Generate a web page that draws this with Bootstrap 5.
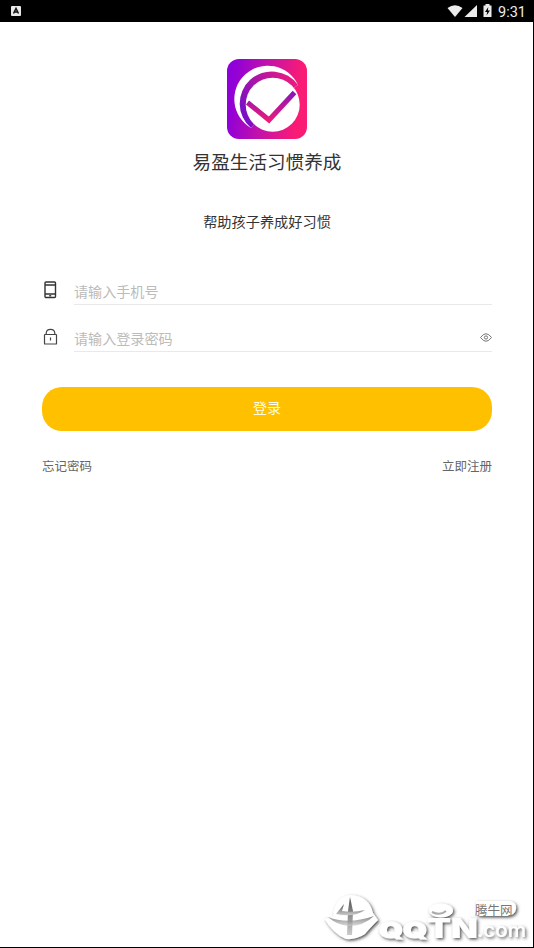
<!DOCTYPE html>
<html lang="zh-CN">
<head>
<meta charset="utf-8">
<meta name="viewport" content="width=device-width, initial-scale=1">
<title>易盈生活习惯养成</title>
<link rel="stylesheet" href="https://cdn.jsdelivr.net/npm/bootstrap@5.3.0/dist/css/bootstrap.min.css">
<style>
body{font-family:"Noto Sans CJK SC",sans-serif;color:#333}
svg{display:block;flex:none}
.screen{height:948px;border-right:1px solid #000;border-bottom:1px solid #000}
.statusbar{height:22px;background:#000;padding:0 7px 0 11px}
.clock{font:400 14.5px/24px Roboto,sans-serif;color:#eee;margin-left:5px}
.form-area{padding:37px 41px 0 42px}
.app-name{font-size:18.6px;line-height:28px;margin-top:8px}
.slogan{font-size:14.2px;line-height:22px;margin-top:35px}
.fields{margin-top:46px}
.field-row{height:47px}
.field-icon{width:32px;padding-top:2px}
.field-line{border-bottom:1px solid #e9e9e9;height:27px}
.field-line .form-control{font-size:14.1px;line-height:22px;height:26px;padding:2px 0 2px!important;border-radius:0;box-shadow:none}
.field-line .form-control::placeholder{color:#bbb;opacity:1}
.btn-login{height:44px;margin-top:15px;background:#ffc000!important;border-radius:20px;font-size:14px;color:#fffbe5!important;border:0;padding:0 0 3px}
.links{margin-top:25px;font-size:12.5px;line-height:20px}
.links a{color:#666}
.brand-stamp{right:0;bottom:0;width:220px;height:60px}
</style>
</head>
<body class="bg-white">
<div class="screen position-relative overflow-hidden">
<header class="statusbar d-flex align-items-center">
<svg width="10" height="10" viewBox="0 0 10 10"><rect width="10" height="10" rx="1" fill="#e8e8e8"/><path d="M2.5 7.5 5 2.5 7.5 7.5M3.6 6h2.8" fill="none" stroke="#111" stroke-width="1.5"/></svg>
<svg class="ms-auto" width="46" height="16" viewBox="0 0 46 16" fill="#ececec"><path d="M.500 5Q8-.5 15.500 5L8 14Z"/><path d="M17.500 14 30 2V14Z"/><path d="M36.500 2.500h2V1h4v1.500h2V14h-8Z"/><path d="M41.300 4 38 9h2.200l-.7 3.500L43 7.500h-2.200Z" fill="#000"/></svg>
<span class="clock pt-1">9:31</span>
</header>
<main class="form-area">
<div class="text-center">
<svg class="mx-auto" width="80" height="80" viewBox="0 0 80 80">
<defs><linearGradient id="tile" gradientUnits="userSpaceOnUse" x1="0" y1="35" x2="80" y2="45"><stop offset=".05" stop-color="#9000d8"/><stop offset=".5" stop-color="#c814a4"/><stop offset=".9" stop-color="#fa1b74"/></linearGradient>
<linearGradient id="arc" gradientUnits="userSpaceOnUse" x1="12" y1="50" x2="70" y2="20"><stop stop-color="#7610c8"/><stop offset="1" stop-color="#f01b7c"/></linearGradient>
<linearGradient id="tick" gradientUnits="userSpaceOnUse" x1="0" y1="34" x2="0" y2="62"><stop stop-color="#8a16b8"/><stop offset="1" stop-color="#ee1b78"/></linearGradient></defs>
<rect width="80" height="80" rx="12" fill="url(#tile)"/>
<path d="M24 69A33.400 33.400 0 1 1 71 26L45 45Z" fill="#fff"/>
<path d="M24 69A32.100 32.100 0 1 1 71 26L45 45Z" fill="url(#arc)"/>
<circle cx="45.700" cy="45.700" r="27" fill="#fff"/>
<path d="M20.500 43.500 42 61 67.500 33.500" fill="none" stroke="url(#tick)" stroke-width="5"/>
</svg>
<h1 class="app-name fw-normal mb-0">易盈生活习惯养成</h1>
<p class="slogan mb-0">帮助孩子养成好习惯</p>
</div>
<form class="fields">
<div class="field-row d-flex">
<div class="field-icon"><svg width="17" height="20" viewBox="0 0 17 20" fill="none" stroke="#333" stroke-width="1.400"><rect x="3" y="2" width="10.500" height="15.500" rx="1"/><path d="M3 5h10.500M3 14h10.500"/><path d="M7.200 15.800h2"/></svg></div>
<div class="field-line flex-grow-1"><input class="form-control border-0 bg-transparent" type="tel" placeholder="请输入手机号" aria-label="手机号"></div>
</div>
<div class="field-row d-flex">
<div class="field-icon"><svg width="17" height="20" viewBox="0 0 17 20" fill="none" stroke="#444" stroke-width="1.200"><rect x="2.500" y="7.500" width="12" height="9.500" rx=".6"/><path d="M4.200 7.500V6Q4.500 2.300 8.500 2.300T12.800 6v1.500M8.500 10.500v3"/></svg></div>
<div class="field-line flex-grow-1 d-flex"><input class="form-control border-0 bg-transparent" type="password" placeholder="请输入登录密码" aria-label="登录密码"><svg class="mt-2" width="12" height="10" viewBox="0 0 12 10" fill="none" stroke="#666" stroke-width=".9"><path d="M.5 4.500Q6-3 11.500 4.500 6 12 .5 4.500Z"/><circle cx="6" cy="4.500" r="1.600"/></svg></div>
</div>
<button class="btn btn-login w-100" type="button">登录</button>
<div class="links d-flex justify-content-between"><a class="text-decoration-none" href="#">忘记密码</a><a class="text-decoration-none" href="#">立即注册</a></div>
</form>
</main>
<svg class="brand-stamp position-absolute" viewBox="314 888 220 60">
<defs><filter id="shade" x="-10%" y="-20%" width="125%" height="150%"><feDropShadow dx="1.500" dy="1.500" stdDeviation="1.500" flood-color="#333" flood-opacity=".85"/></filter>
<linearGradient id="horn" x1="0" y1="0" x2="0" y2="1"><stop stop-color="#555"/><stop offset="1" stop-color="#ccc"/></linearGradient></defs>
<g filter="url(#shade)" fill="#fff">
<path d="M325 919Q331 921 334 917 336 897 352 896 370 897 374 914L379 921Q371 929 366 935 357 941 347 940 334 935 325 919Z"/>
<ellipse cx="442" cy="911.500" rx="12" ry="7"/>
<path d="M477 902h33q8 1 7 8-1 7-10 7h-25q-5 0-5-4Z"/>
<text x="380" y="939" font-family="Inter,sans-serif" font-weight="900" font-size="21" textLength="48" lengthAdjust="spacingAndGlyphs" stroke="#fff">QQ</text>
<text x="428" y="939" font-family="Inter,sans-serif" font-weight="900" font-size="27" textLength="51" lengthAdjust="spacingAndGlyphs">TN</text>
<text x="478" y="938" font-family="Inter,sans-serif" font-weight="500" font-size="20" textLength="49" lengthAdjust="spacingAndGlyphs">.com</text>
</g>
<g fill="url(#horn)"><path d="M351 898 354 912 353 936H348L349 912Z"/><path d="M337 915 345 905 343 912Q354 914 366 911 355 919 337 915Z"/><path d="M329 918Q349 926 375 917 365 927 349 927 338 926 329 918Z" opacity=".7"/></g>
<path d="M433 913q8 4 14-1" fill="none" stroke="#aaa" stroke-width="2"/>
<text x="476" y="915.500" font-family="Noto Sans CJK SC,sans-serif" font-size="12.500" fill="#777">腾牛网</text>
</svg>
</div>
<script src="https://cdn.jsdelivr.net/npm/bootstrap@5.3.0/dist/js/bootstrap.bundle.min.js"></script>
</body>
</html>
